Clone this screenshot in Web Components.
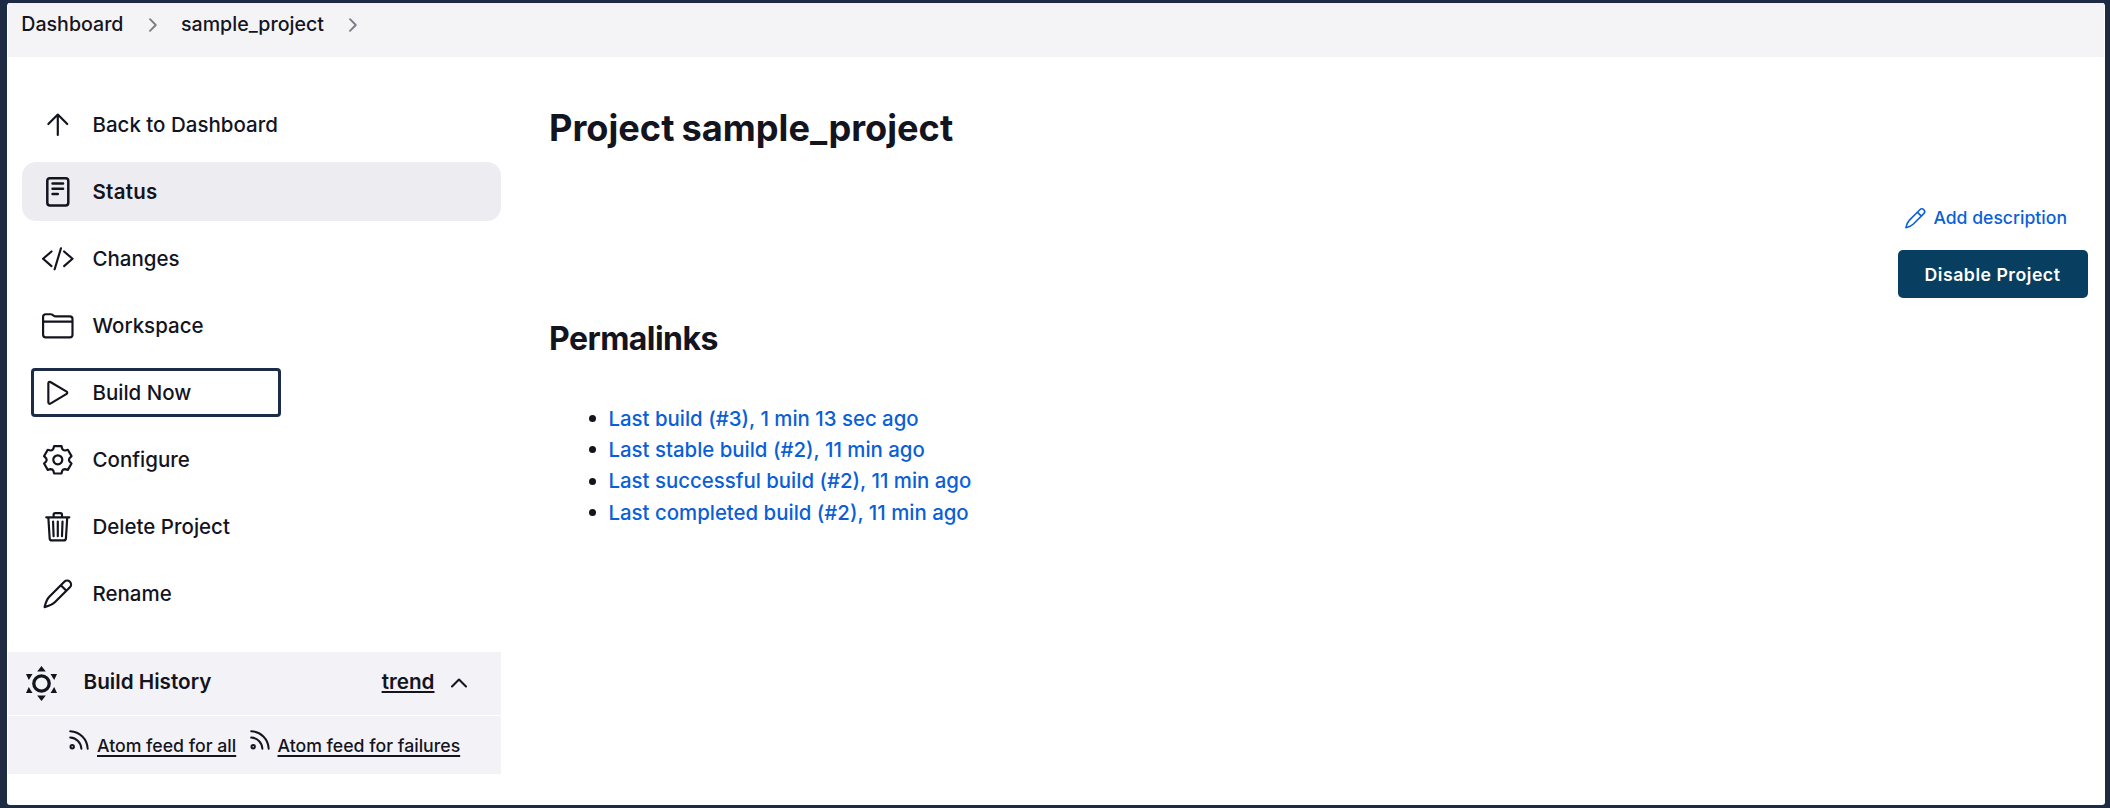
<!DOCTYPE html>
<html lang="en">
<head>
<meta charset="utf-8">
<title>sample_project</title>
<style>
  html, body { margin: 0; height: 100%; }
  body { font-family: Inter, "Liberation Sans", sans-serif; color: #14141f; background: #1d2b43; overflow: hidden; }
</style>
</head>
<body>
<project-page></project-page>
<script>
const polar = (deg, r) => {
  const a = deg * Math.PI / 180;
  return (Math.sin(a) * r).toFixed(2) + ' ' + (-Math.cos(a) * r).toFixed(2);
};
let gear = '';
for (let k = 0; k < 6; k++) {
  const d = k * 60;
  gear += `${k ? 'L' : 'M'}${polar(d - 15, 14.2)}L${polar(d + 15, 14.2)}L${polar(d + 22, 11.8)}Q${polar(d + 30, 10.6)} ${polar(d + 38, 11.8)}`;
}
gear += 'Z';

const ion = (body) => ({ box: '0 0 512 512', size: 33.6, sw: 33, body });
const pencil = '<path d="M6.5-12.1L-8.5 3C-10.7 5.2-12 8.2-13.2 13.3C-8.1 12-5.1 10.6-3 8.5L12.1-6.5A3.95 3.95 0 0 0 6.5-12.1ZM3-8.6L8.6-3"/>';
const ICONS = {
  up: ion('<path d="M112 244l144-144 144 144M256 120v292"/>'),
  status: { ...ion('<rect x="96" y="48" width="320" height="416" rx="40"/><path d="M176 128h160M176 208h160M176 288h80"/>'), sw: 38 },
  code: ion('<path d="M160 368L32 256l128-112M352 368l128-112-128-112M304 96l-96 320"/>'),
  folder: ion('<path d="M440 432H72a40 40 0 01-40-40V120a40 40 0 0140-40h75.89a40 40 0 0122.19 6.72l27.84 18.56a40 40 0 0022.19 6.72H440a40 40 0 0140 40v240a40 40 0 01-40 40zM32 192h448"/>'),
  play: ion('<path d="M112 111v290c0 17.44 17 28.52 31 20.16l247.9-148.37c12.12-7.25 12.12-26.33 0-33.58L143 90.84c-14-8.36-31 2.72-31 20.16z"/>'),
  gear: { box: '-16.8 -16.8 33.6 33.6', size: 33.6, sw: 2.2, body: `<path d="${gear}"/><circle r="4.5"/>` },
  trash: ion('<path d="M112 112l20 320c.95 18.49 14.4 32 32 32h184c17.67 0 30.87-13.51 32-32l20-320M80 112h352M192 112V72a24 24 0 0124-24h80a24 24 0 0124 24v40M256 176v224M184 176l8 224M328 176l-8 224"/>'),
  pencil: { box: '-16.8 -16.8 33.6 33.6', size: 33.6, sw: 2.2, body: pencil },
  pencilSmall: { box: '-14.5 -14.5 29 29', size: 20.5, sw: 2.2, body: pencil },
  right: { box: '0 0 10 16', size: 16, w: 10, sw: 1.9, body: '<path d="M2 2.2L7.8 8 2 13.8"/>' },
  chevron: { box: '0 0 18 12', size: 12, w: 18, sw: 2.1, body: '<path d="M2 9.5L9 2.5 16 9.5"/>' },
  feed: { box: '0 0 20 20', size: 20, sw: 2, body: '<circle cx="3.2" cy="16.7" r="1.7"/><path d="M1.2 1.2C10.8 1.7 18.2 9 18.7 18.7M1.2 7.6C7.5 8 12 12.5 12.4 18.7"/>' },
  build: { box: '-17.5 -17.5 35 35', size: 35, sw: 3.3, body: '<circle r="7.7"/><g fill="currentColor" stroke="none"><path d="M0-17.5L4.3-12H-4.3Z"/><path d="M0 17.5L4.3 12H-4.3Z"/><path d="M-15.5-9.4H-9L-12.7-3.5Z"/><path d="M15.5-9.4H9L12.7-3.5Z"/><path d="M-15.5 9.4H-9L-12.7 3.5Z"/><path d="M15.5 9.4H9L12.7 3.5Z"/></g>' }
};

class UiIcon extends HTMLElement {
  connectedCallback() {
    const i = ICONS[this.getAttribute('name')];
    this.attachShadow({ mode: 'open' }).innerHTML = `
      <style>:host{display:block;flex:none} svg{display:block;overflow:visible}</style>
      <svg width="${i.w || i.size}" height="${i.size}" viewBox="${i.box}" fill="none" stroke="currentColor" stroke-width="${i.sw}" stroke-linecap="round" stroke-linejoin="round">${i.body}</svg>`;
  }
}

const define = (name, html) => customElements.define(name, class extends HTMLElement {
  constructor() {
    super();
    this.attachShadow({ mode: 'open' }).innerHTML = html;
  }
});

customElements.define('ui-icon', UiIcon);

define('crumb-item', `
  <style>
    :host{display:flex;align-items:center;font-size:19.6px;line-height:24px;font-weight:450}
    ui-icon{color:#7c7c86;margin:1px 23px 0 24.5px}
  </style>
  <slot></slot><ui-icon name="right"></ui-icon>`);

define('crumb-bar', `
  <style>
    :host{display:flex;align-items:flex-start;height:54px;box-sizing:border-box;padding:9px 0 0 13.3px;background:#f4f4f6}
  </style>
  <slot></slot>`);

customElements.define('task-link', class extends HTMLElement {
  constructor() {
    super();
    this.attachShadow({ mode: 'open' }).innerHTML = `
      <style>
        :host{display:flex;align-items:center;position:relative;height:59px;margin-left:14.3px;padding-left:19px;box-sizing:border-box;border-radius:14px;font-size:20.5px;font-weight:450;gap:17.6px}
        :host([active]){background:#edecf1;font-weight:560;letter-spacing:.25px}
        .mark{display:none}
        :host([marked]) .mark{display:block;position:absolute;left:8.7px;top:5px;width:250px;height:49px;box-sizing:border-box;border:3px solid #1b2b48;border-radius:4px}
      </style>
      <ui-icon name="${this.getAttribute('icon')}"></ui-icon><slot></slot><span class="mark"></span>`;
  }
});

define('feed-link', `
  <style>
    :host{display:flex;gap:8px;font-size:17.7px;line-height:22px;font-weight:500}
    ui-icon{margin-top:-5px}
    a{text-decoration:underline;text-decoration-thickness:1.5px;text-underline-offset:2.5px;text-decoration-skip-ink:none}
  </style>
  <ui-icon name="feed"></ui-icon><a><slot></slot></a>`);

define('build-history', `
  <style>
    :host{display:flex;flex-direction:column;gap:1px;margin-top:28.5px}
    .head{display:flex;align-items:center;height:63px;box-sizing:border-box;padding:0 33.5px 0 16px;background:#f3f2f7;font-size:20.7px;font-weight:600}
    b{font-weight:600;margin:-4px auto 0 24.5px}
    a{margin:-4px 15px 0 0;text-decoration:underline;text-decoration-thickness:2px;text-underline-offset:2px;text-decoration-skip-ink:none}
    .feeds{display:flex;gap:13.3px;height:58px;box-sizing:border-box;padding:19px 0 0 61px;background:#f3f2f7}
  </style>
  <div class="head"><ui-icon name="build"></ui-icon><b>Build History</b><a>trend</a><ui-icon name="chevron"></ui-icon></div>
  <div class="feeds"><feed-link>Atom feed for all</feed-link><feed-link>Atom feed for failures</feed-link></div>`);

define('side-panel', `
  <style>
    :host{display:flex;flex-direction:column;width:493px;padding-top:38px;box-sizing:border-box}
    nav{display:flex;flex-direction:column;gap:8px}
  </style>
  <nav>
    <task-link icon="up">Back to Dashboard</task-link>
    <task-link icon="status" active>Status</task-link>
    <task-link icon="code">Changes</task-link>
    <task-link icon="folder">Workspace</task-link>
    <task-link icon="play" marked>Build Now</task-link>
    <task-link icon="gear">Configure</task-link>
    <task-link icon="trash">Delete Project</task-link>
    <task-link icon="pencil">Rename</task-link>
  </nav>
  <build-history></build-history>`);

define('permalink-item', `
  <style>
    :host{display:flex;align-items:center;gap:12.2px;font-size:20.4px;line-height:31.3px;font-weight:540;color:#0b5fd6}
    i{width:7px;height:7px;border-radius:50%;background:#14141f}
  </style>
  <i></i><a><slot></slot></a>`);

define('project-main', `
  <style>
    :host{display:flex;flex-direction:column;padding:51.4px 16.5px 0 48px;box-sizing:border-box}
    h1{margin:0;font-size:36.2px;line-height:40px;font-weight:700;word-spacing:-1.5px}
    h2{margin:23.4px 0 0;font-size:32px;line-height:36px;font-weight:700;letter-spacing:-.55px}
    .actions{display:flex;flex-direction:column;align-items:flex-end;margin-top:57.6px}
    .desc{display:flex;align-items:center;gap:7.5px;margin-right:20.5px;font-size:17.6px;line-height:24px;font-weight:540;color:#0b5fd6}
    button{margin:20.5px 0 0;width:190px;height:47.5px;padding:0;border:0;border-radius:5px;background:#083f60;color:#fff;font:600 17.7px Inter,sans-serif;letter-spacing:.5px}
    .links{display:flex;flex-direction:column;margin:45.5px 0 0 40.3px}
  </style>
  <h1>Project sample_project</h1>
  <div class="actions">
    <a class="desc"><ui-icon name="pencilSmall"></ui-icon>Add description</a>
    <button>Disable Project</button>
  </div>
  <h2>Permalinks</h2>
  <div class="links">
    <permalink-item>Last build (#3), 1 min 13 sec ago</permalink-item>
    <permalink-item>Last stable build (#2), 11 min ago</permalink-item>
    <permalink-item>Last successful build (#2), 11 min ago</permalink-item>
    <permalink-item>Last completed build (#2), 11 min ago</permalink-item>
  </div>`);

define('project-page', `
  <style>
    :host{display:block;box-sizing:border-box;height:100vh;padding:3px 5px 3px 7px;background:#1d2b43}
    .sheet{height:100%;box-sizing:border-box;padding:0 1px;background:#fff;border-radius:3px;overflow:hidden}
    .body{display:grid;grid-template-columns:493px 1fr}
  </style>
  <div class="sheet">
    <crumb-bar><crumb-item>Dashboard</crumb-item><crumb-item>sample_project</crumb-item></crumb-bar>
    <div class="body"><side-panel></side-panel><project-main></project-main></div>
  </div>`);
</script>
</body>
</html>
